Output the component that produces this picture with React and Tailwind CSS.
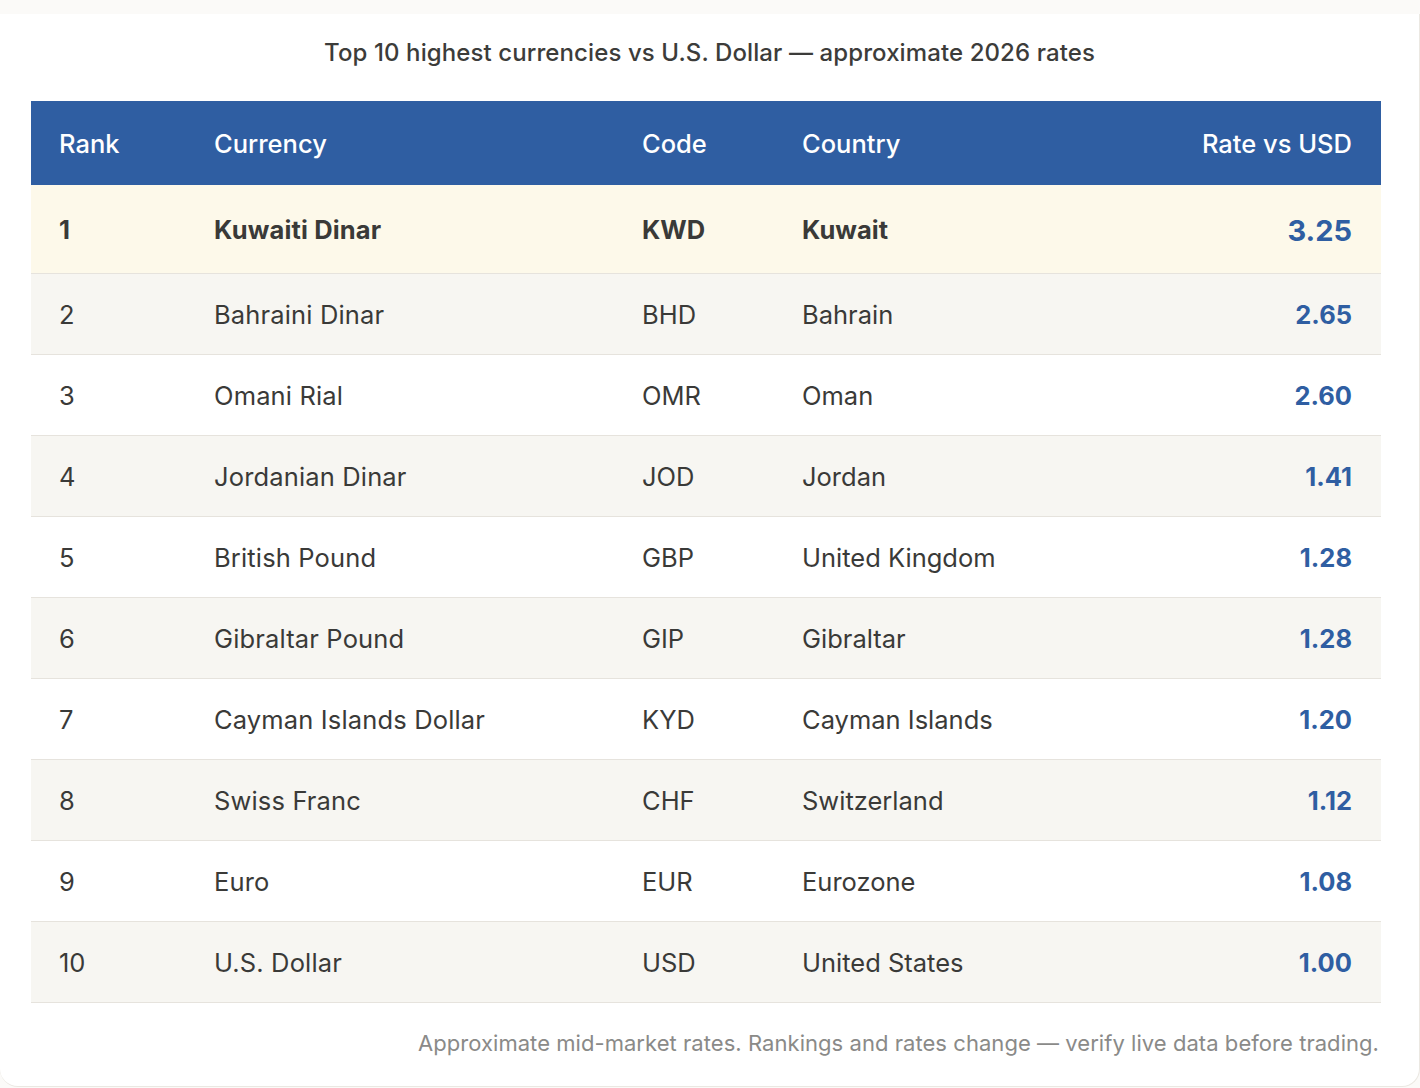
import React from "react";

const rows = [
  ["1", "Kuwaiti Dinar", "KWD", "Kuwait", "3.25"],
  ["2", "Bahraini Dinar", "BHD", "Bahrain", "2.65"],
  ["3", "Omani Rial", "OMR", "Oman", "2.60"],
  ["4", "Jordanian Dinar", "JOD", "Jordan", "1.41"],
  ["5", "British Pound", "GBP", "United Kingdom", "1.28"],
  ["6", "Gibraltar Pound", "GIP", "Gibraltar", "1.28"],
  ["7", "Cayman Islands Dollar", "KYD", "Cayman Islands", "1.20"],
  ["8", "Swiss Franc", "CHF", "Switzerland", "1.12"],
  ["9", "Euro", "EUR", "Eurozone", "1.08"],
  ["10", "U.S. Dollar", "USD", "United States", "1.00"],
];

export default function App() {
  return (
    <div className="min-h-[1088px] bg-[#fbfaf8] pt-[14px] font-['Inter','Noto_Sans',sans-serif] text-[#3a3a38]">
      <div className="bg-white rounded-b-[18px] border-b border-r border-[#ebe8e2] h-[1073px] flex flex-col">
        <h1 className="text-center text-[24px] font-medium text-[#3c3c3a] mt-[24px] leading-[30px] tracking-[0.1px]">
          Top 10 highest currencies vs U.S. Dollar — approximate 2026 rates
        </h1>
        <div className="px-[31px] mt-[33px] pr-[38px]">
          <table className="w-full border-collapse table-fixed text-[25.5px]">
            <colgroup>
              <col className="w-[155px]" />
              <col className="w-[428px]" />
              <col className="w-[160px]" />
              <col />
              <col className="w-[300px]" />
            </colgroup>
            <thead>
              <tr className="bg-[#2f5ea2] text-white h-[84px]">
                <th className="text-left font-medium pl-[28px] pt-[2px]">Rank</th>
                <th className="text-left font-medium pl-[28px] pt-[2px]">Currency</th>
                <th className="text-left font-medium pl-[28px] pt-[2px]">Code</th>
                <th className="text-left font-medium pl-[28px] pt-[2px]">Country</th>
                <th className="text-right font-medium pr-[29px] pt-[2px]">Rate vs USD</th>
              </tr>
            </thead>
            <tbody>
              {rows.map((r, i) => {
                const first = i === 0;
                const bg = first ? "bg-[#fdf9ea]" : i % 2 === 1 ? "bg-[#f7f6f2]" : "bg-white";
                return (
                  <tr
                    key={r[0]}
                    className={`${bg} border-b border-[#e6e3dd] ${first ? "h-[88px] font-bold" : "h-[81px]"}`}
                  >
                    <td className="pl-[28px] pt-[3px]">{r[0]}</td>
                    <td className="pl-[28px] pt-[3px] tracking-[0.15px]">{r[1]}</td>
                    <td className="pl-[28px] pt-[3px]">{r[2]}</td>
                    <td className="pl-[28px] pt-[3px]">{r[3]}</td>
                    <td
                      className={`text-right pr-[29px] pt-[3px] font-bold text-[#2f5ea2] ${first ? "text-[29px]" : ""}`}
                    >
                      {r[4]}
                    </td>
                  </tr>
                );
              })}
            </tbody>
          </table>
        </div>
        <p className="text-right text-[22px] text-[#8a8a88] pr-[40px] mt-[25px] leading-[30px] tracking-[0.05px]">
          Approximate mid-market rates. Rankings and rates change — verify live data before trading.
        </p>
      </div>
    </div>
  );
}
